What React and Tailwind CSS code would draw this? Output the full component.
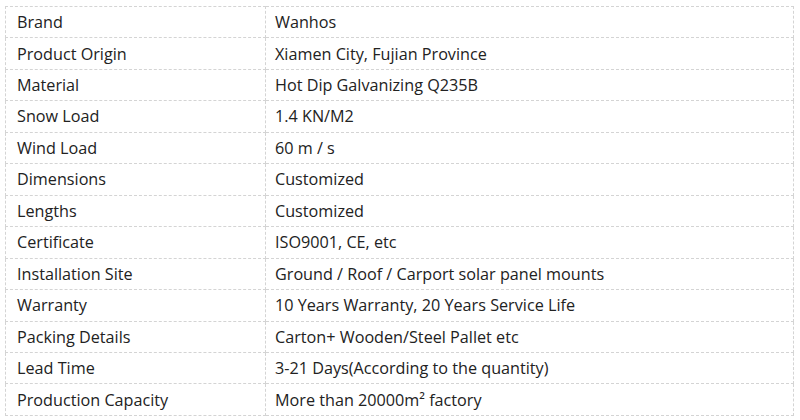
const rows = [
  ["Brand", "Wanhos"],
  ["Product Origin", "Xiamen City, Fujian Province"],
  ["Material", "Hot Dip Galvanizing Q235B"],
  ["Snow Load", "1.4 KN/M2"],
  ["Wind Load", "60 m / s"],
  ["Dimensions", "Customized"],
  ["Lengths", "Customized"],
  ["Certificate", "ISO9001, CE, etc"],
  ["Installation Site", "Ground / Roof / Carport solar panel mounts"],
  ["Warranty", "10 Years Warranty, 20 Years Service Life"],
  ["Packing Details", "Carton+ Wooden/Steel Pallet etc"],
  ["Lead Time", "3-21 Days(According to the quantity)"],
  ["Production Capacity", "More than 20000m² factory"],
];

export default function App() {
  return (
    <div className="h-[420px] w-[800px] bg-white pl-[5px] pt-[6px]">
      <table
        className="w-[789px] border-collapse text-[16.2px] text-[#222]"
        style={{ fontFamily: '"Open Sans", "Noto Sans", sans-serif' }}
      >
        <tbody>
          {rows.map(([label, value]) => (
            <tr key={label} className="h-[31.46px]">
              <td className="w-[260px] border border-dashed border-[#d4d4d4] py-0 pl-[11px] leading-none">
                {label}
              </td>
              <td className="border border-dashed border-[#d4d4d4] py-0 pl-[9px] leading-none">{value}</td>
            </tr>
          ))}
        </tbody>
      </table>
    </div>
  );
}
